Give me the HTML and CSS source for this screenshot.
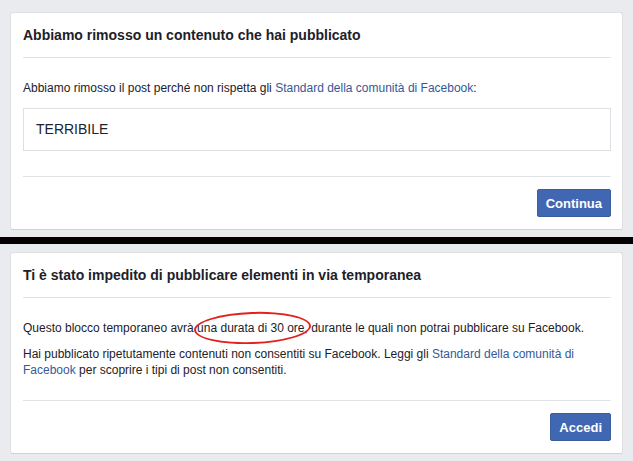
FILE: index.html
```html
<!DOCTYPE html>
<html>
<head>
    <title>Contenuto rimosso</title>
    <link rel="stylesheet" href="styles.css">
</head>
<body>
    <div class="dialog dialog-first">
        <div class="dialog-header">
            <h2>Abbiamo rimosso un contenuto che hai pubblicato</h2>
        </div>
        <div class="dialog-body body-removed">
            <p>Abbiamo rimosso il post perché non rispetta gli <a href="#">Standard della comunità di Facebook</a>:</p>
            <div class="quoted-post">TERRIBILE</div>
        </div>
        <div class="dialog-footer">
            <button class="button">Continua</button>
        </div>
    </div>

    <div class="divider"></div>

    <div class="dialog">
        <div class="dialog-header">
            <h2>Ti è stato impedito di pubblicare elementi in via temporanea</h2>
        </div>
        <div class="dialog-body">
            <p>Questo blocco temporaneo avrà <span class="circled">una durata di 30 ore,</span> durante le quali non potrai pubblicare su Facebook.</p>
            <p>Hai pubblicato ripetutamente contenuti non consentiti su Facebook. Leggi gli <a href="#">Standard della comunità di Facebook</a> per scoprire i tipi di post non consentiti.</p>
        </div>
        <div class="dialog-footer">
            <button class="button">Accedi</button>
        </div>
    </div>
</body>
</html>
```

FILE: styles.css
```css
body {
    margin: 0;
    padding: 12px 10px 0 10px;
    font-family: "Liberation Sans", Arial, sans-serif;
    background-color: #e9ebee;
    color: #1d2129;
}
.dialog {
    background: white;
    border: 1px solid #dddfe2;
    border-bottom-color: #cfd1d5;
    border-radius: 3px;
}
.dialog-first {
    margin-bottom: 7px;
}
.divider {
    height: 7px;
    background: #060003;
    margin: 0 -10px 8px -10px;
}
.dialog-header {
    margin: 0 11px 0 12px;
    padding: 13px 0;
    border-bottom: 1px solid #e1e2e5;
}
.dialog-header h2 {
    margin: 0;
    font-size: 14px;
    line-height: 18px;
    font-weight: bold;
}
.dialog-body {
    margin: 0 11px 0 12px;
    padding: 22px 0;
    font-size: 12px;
    line-height: 16px;
}
.body-removed {
    padding-bottom: 25px;
}
.dialog-body p {
    margin: 0 0 10px 0;
}
.dialog-body p:last-child {
    margin-bottom: 0;
}
.dialog-body a {
    color: #365899;
    text-decoration: none;
}
.quoted-post {
    margin-top: 12px;
    padding: 12px;
    border: 1px solid #dddfe2;
    font-size: 14px;
    line-height: 17px;
}
.circled {
    position: relative;
}
.circled::after {
    content: "";
    position: absolute;
    left: -3px;
    right: -3px;
    top: -9px;
    bottom: -9px;
    border: 2px solid #e2211c;
    border-radius: 50%;
    transform: rotate(-2deg);
}
.dialog-footer {
    margin: 0 11px 0 12px;
    padding: 12px 0;
    border-top: 1px solid #e1e2e5;
    display: flex;
    justify-content: flex-end;
}
.button {
    height: 28px;
    padding: 0 8px;
    background: #4267b2;
    border: 1px solid #3b5e9f;
    border-radius: 2px;
    color: white;
    font-family: "Liberation Sans", Arial, sans-serif;
    font-size: 13px;
    font-weight: bold;
}
```
